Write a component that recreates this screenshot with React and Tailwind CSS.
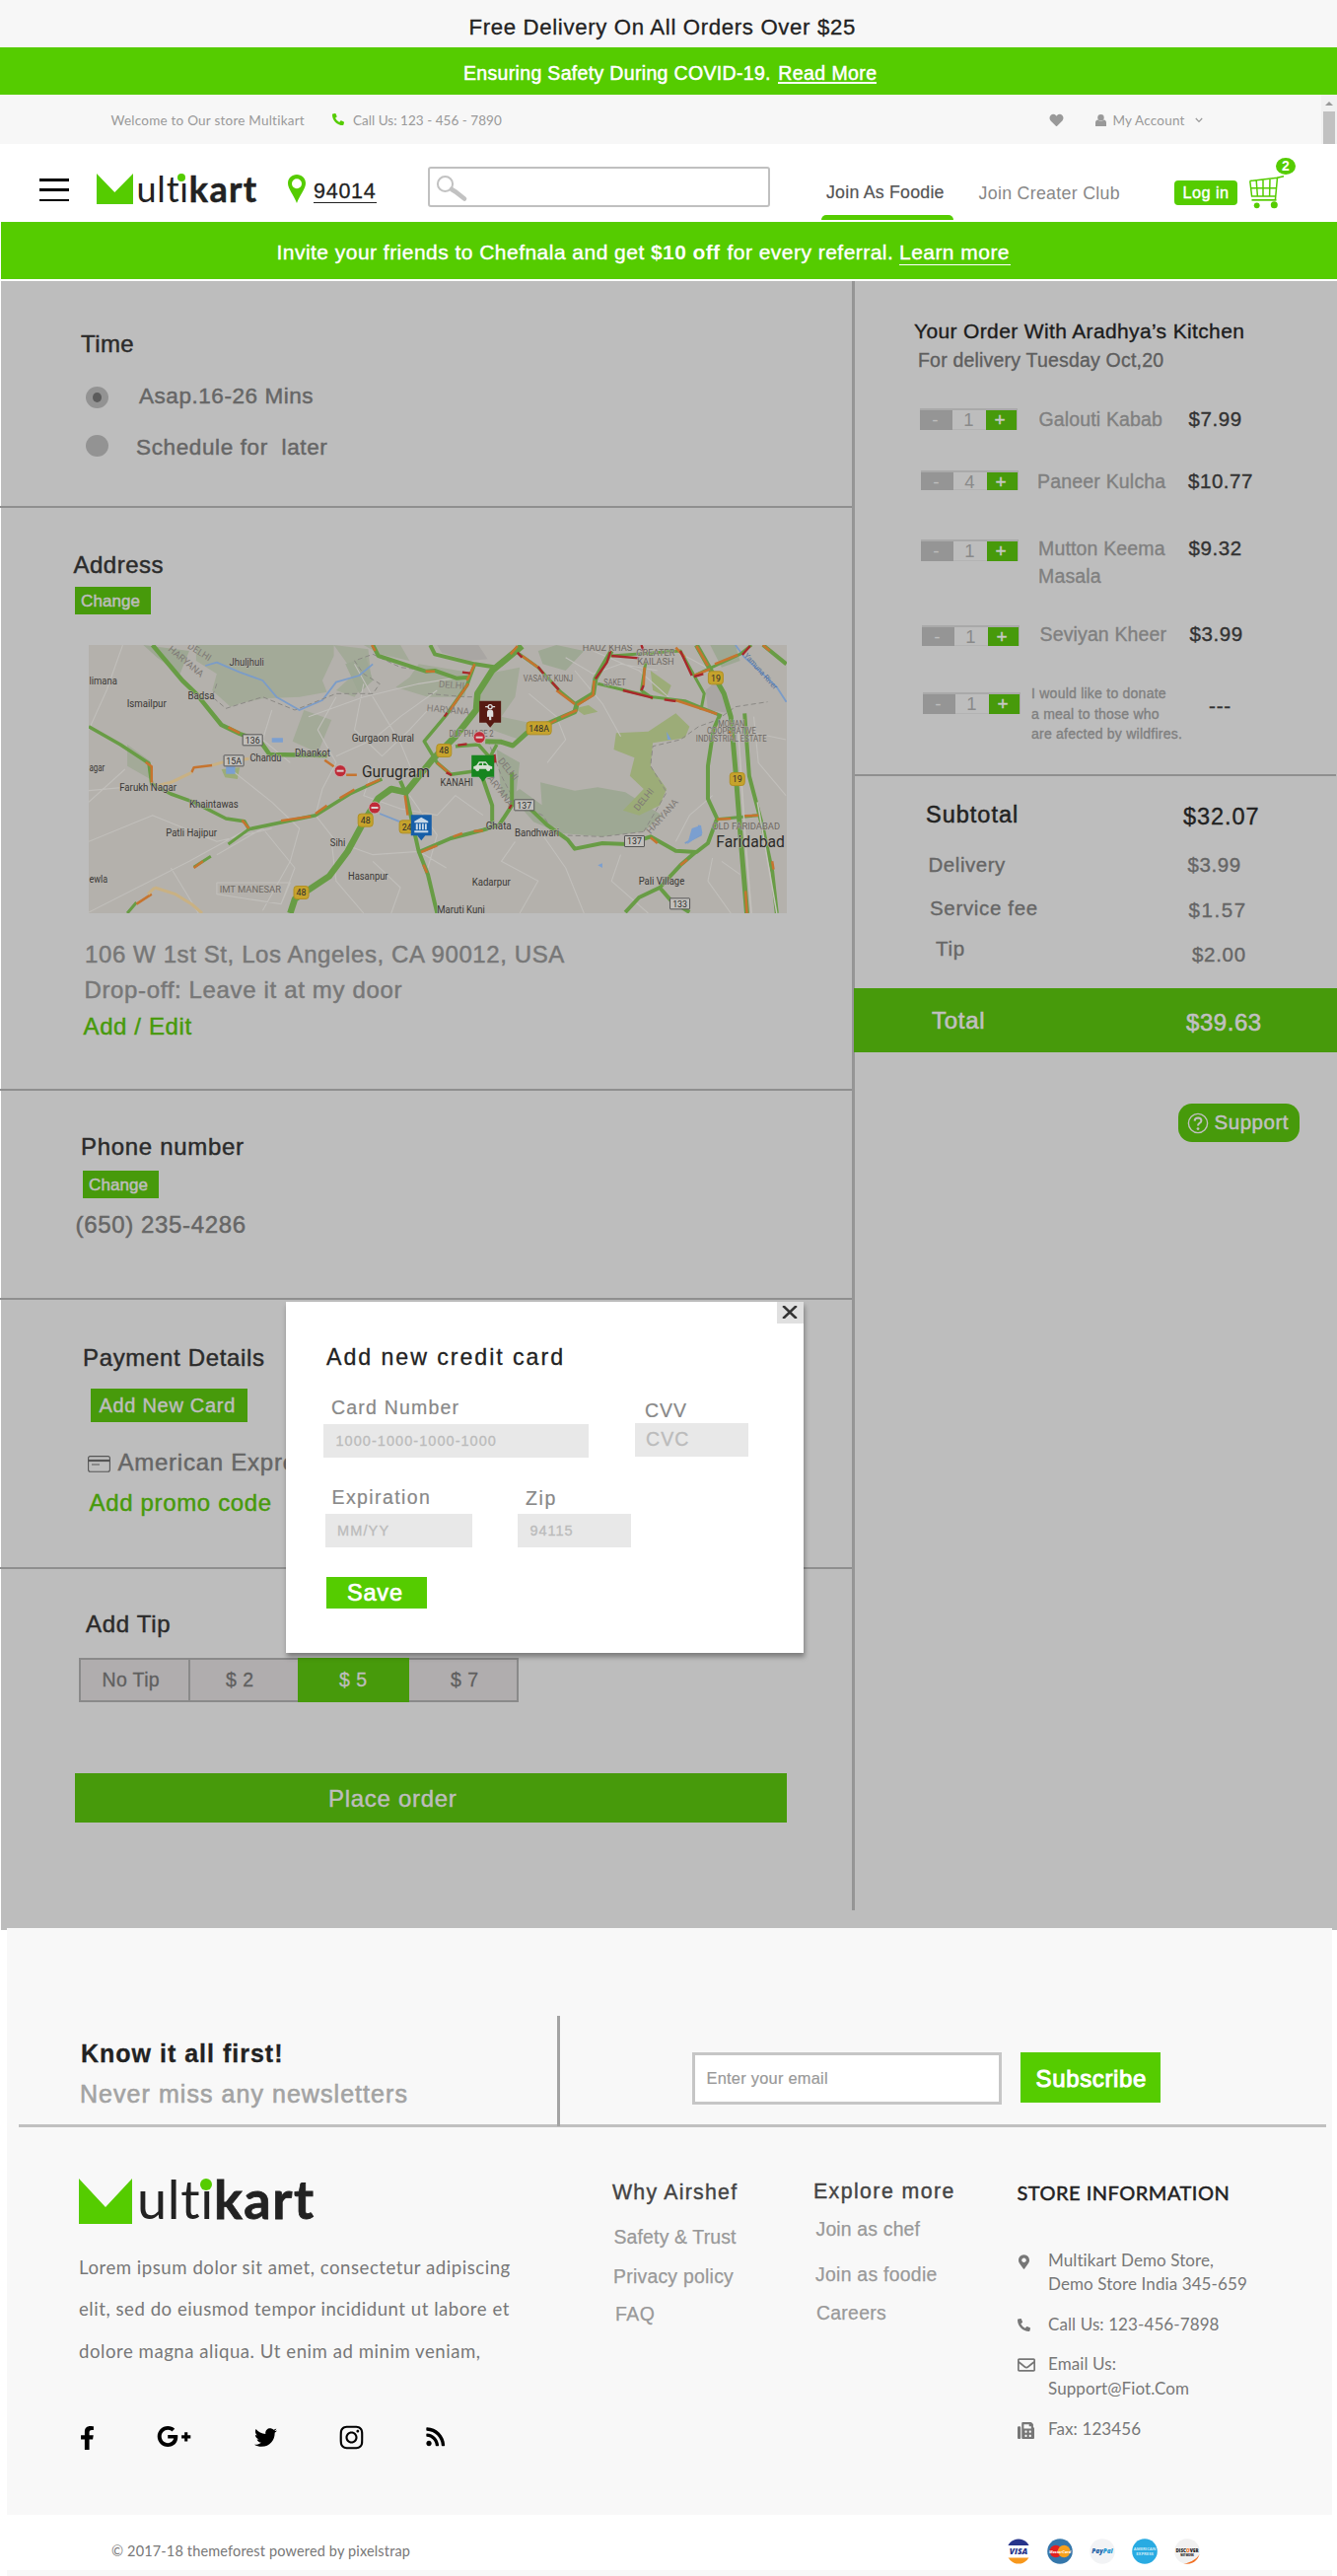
import React from "react";
import {
  FaPhoneAlt,
  FaHeart,
  FaFacebookF,
  FaGooglePlusG,
  FaTwitter,
  FaInstagram,
  FaRss,
  FaMapMarkerAlt,
  FaRegEnvelope,
  FaFax,
} from "react-icons/fa";

/* ---------- Logo ---------- */

function HeaderLogo() {
  return (
    <div className="flex h-[42px] w-[166px] items-start font-[Lato] text-[#222]">
      <svg className="mt-[5px] h-[31px] w-[37px] shrink-0" viewBox="0 0 37 31">
        <path d="M0 0L18.3 19L37 0V31H0Z" fill="#55cc00" />
      </svg>
      <div className="relative ml-[4px] flex whitespace-nowrap text-[36px] leading-[40px]">
        <span className="tracking-[0.8px]">ult&#305;</span>
        <span className="tracking-[1.3px] font-bold [-webkit-text-stroke:0.5px]">kart</span>
        <span className="absolute left-[41px] top-[5px] h-[8px] w-[8px] rounded-full bg-[#55cc00]" />
      </div>
    </div>
  );
}

function FooterLogo() {
  return (
    <div className="flex h-[60px] w-[260px] items-start font-[Lato] text-[#222]">
      <svg className="h-[46px] w-[54px] shrink-0" viewBox="0 0 54 46">
        <path d="M0 0L27 29L54 0V46H0Z" fill="#55cc00" />
      </svg>
      <div className="relative ml-[5px] -mt-[9px] flex whitespace-nowrap text-[54px] leading-[60px]">
        <span className="tracking-[0.7px]">ult&#305;</span>
        <span className="tracking-[1.5px] font-bold [-webkit-text-stroke:0.8px]">kart</span>
        <span className="absolute left-[63.5px] top-[9px] h-[12px] w-[12px] rounded-full bg-[#55cc00]" />
      </div>
    </div>
  );
}

/* ---------- Header ---------- */

function CartIcon() {
  return (
    <svg className="h-[36px] w-[36px]" viewBox="0 0 36 36" fill="none" stroke="#55cc00" strokeWidth="1.5">
      <path d="M35 0.8L28.5 2.2L26.5 24M0.5 5.6L28.5 2.2M0.8 5.6L2.6 21H27M1.6 12.8H27.5M7.2 5L8.4 21M14 4.2V21M21 3.2L20.6 21" />
      <path d="M2.5 24.8H27.5" strokeWidth="1.8" />
      <circle cx="7.7" cy="30.3" r="2.9" fill="#55cc00" stroke="none" />
      <circle cx="25.3" cy="29.7" r="3.5" fill="#55cc00" stroke="none" />
    </svg>
  );
}

function Header() {
  return (
    <header>
      <div className="h-[48px] bg-[#f7f7f7] pl-[475.5px] pt-[15.7px] text-[22.2px] leading-[24px] tracking-[0.66px] text-[#222] [-webkit-text-stroke:0.3px_#222]">
        Free Delivery On All Orders Over $25
      </div>
      <div className="flex h-[48px] items-start bg-[#55cc00] pl-[470px] pt-[14px] text-[19.5px] leading-[24px] text-white [-webkit-text-stroke:0.5px_#fff]">
        <span className="tracking-[0.33px]">Ensuring Safety During COVID-19.</span>
        <span className="ml-[7.5px] h-[22.5px] border-b-2 border-white tracking-[0.4px]">Read More</span>
      </div>
      <div className="flex h-[50px] items-start bg-[#f7f7f7] font-[Lato] text-[13.5px] leading-[24px] text-[#999]">
        <span className="ml-[112.5px] mt-[13.5px] w-[224px] tracking-[0.23px]">Welcome to Our store Multikart</span>
        <FaPhoneAlt className="mt-[19px] h-[12px] w-[12px] text-[#55cc00]" />
        <span className="ml-[9.5px] mt-[13.5px] w-[706px] tracking-[0.03px]">Call Us: 123 - 456 - 7890</span>
        <FaHeart className="mt-[19px] h-[14px] w-[15px]" />
        <svg className="ml-[32px] mt-[20px] h-[12px] w-[11px]" viewBox="0 0 11 12" fill="#999">
          <circle cx="5.5" cy="3.2" r="3.2" />
          <path d="M0 12V8.5Q0 5.6 2.5 5.4Q5.5 8 8.5 5.4Q11 5.6 11 8.5V12Z" />
        </svg>
        <span className="ml-[6.5px] mt-[13.5px] w-[83.5px] tracking-[0.2px]">My Account</span>
        <svg className="mt-[23px] h-[6px] w-[8px]" viewBox="0 0 8 6" fill="none" stroke="#999" strokeWidth="1.2">
          <path d="M0.8 1L4 4.4L7.2 1" />
        </svg>
        <div className="ml-auto flex h-[50px] w-[16.5px] flex-col items-center bg-[#f1f1f1]">
          <svg className="mt-[7px] h-[4px] w-[8px]" viewBox="0 0 8 4">
            <path d="M0 4L4 0L8 4Z" fill="#999" />
          </svg>
          <div className="mt-[6px] w-[12.5px] flex-1 bg-[#c1c1c1]" />
        </div>
      </div>
      <div className="flex h-[79px] items-start bg-white">
        <div className="ml-[40px] mt-[35px] flex w-[30px] flex-col gap-[7.7px]">
          <div className="h-[2.7px] bg-black" />
          <div className="h-[2.7px] bg-black" />
          <div className="h-[2.7px] bg-black" />
        </div>
        <div className="ml-[27.5px] mt-[25px]">
          <HeaderLogo />
        </div>
        <svg className="ml-[28.5px] mt-[31px] h-[29px] w-[18px]" viewBox="0 0 18 29">
          <path
            fillRule="evenodd"
            d="M9 0C4 0 0 3.9 0 8.8C0 14.5 6 21 9 29C12 21 18 14.5 18 8.8C18 3.9 14 0 9 0ZM9 4.2A5 5 0 1 1 9 14.2A5 5 0 1 1 9 4.2Z"
            fill="#55cc00"
          />
        </svg>
        <div className="ml-[8px] mt-[36px] h-[24px] w-[64px] border-b-[1.5px] border-[#222] text-[21.5px] leading-[24px] tracking-[0.75px] text-[#222] [-webkit-text-stroke:0.3px_#222]">
          94014
        </div>
        <div className="ml-[52px] mt-[23px] flex h-[41px] w-[347px] rounded-[3px] border-2 border-[#c0c0c0] bg-white">
          <svg className="ml-[6px] mt-[6px] h-[28px] w-[34px]" viewBox="0 0 34 28" fill="none" stroke="#c2c2c2">
            <ellipse cx="9.5" cy="9.5" rx="7.6" ry="7.4" strokeWidth="2" />
            <path d="M16 15L20 17.5L29 24.5" strokeWidth="4.6" strokeLinecap="round" />
          </svg>
        </div>
        <div className="ml-[52px] mt-[37px] flex w-[134px] flex-col items-start">
          <span className="ml-[5px] text-[17.8px] leading-[24px] tracking-[0.22px] text-[#555] [-webkit-text-stroke:0.2px_#555]">Join As Foodie</span>
          <div className="mt-[11px] h-[5px] w-full rounded-t-[5px] bg-[#55cc00]" />
        </div>
        <span className="ml-[25.5px] mt-[38px] w-[198.5px] text-[17.8px] leading-[24px] tracking-[0.3px] text-[#888]">Join Creater Club</span>
        <div className="mt-[37px] h-[25px] w-[64px] rounded-[4px] bg-[#55cc00] pl-[8.5px] text-[16.3px] leading-[25px] tracking-[0.45px] text-white [-webkit-text-stroke:0.4px_#fff]">
          Log in
        </div>
        <div className="relative ml-[12px] mt-[32px]">
          <CartIcon />
          <div className="absolute -top-[18px] left-[27px] h-[17px] w-[20px] rounded-[50%] bg-[#55cc00] text-center text-[14px] font-bold leading-[17px] text-white">2</div>
        </div>
      </div>
      <div className="ml-px flex h-[58px] items-start bg-[#55cc00] pl-[279.5px] pt-[19px] text-[21px] leading-[24px] text-white [-webkit-text-stroke:0.4px_#fff]">
        <span className="w-[379.5px] tracking-[0.47px]">Invite your friends to Chefnala and get</span>
        <span className="w-[77.5px] font-bold tracking-[0.4px] [-webkit-text-stroke:0px]">$10 off</span>
        <span className="w-[174.5px] tracking-[0.47px]">for every referral.</span>
        <span className="h-[24.5px] w-[112.5px] border-b-[1.5px] border-white tracking-[0.46px]">Learn more</span>
      </div>
      <div className="h-[2px] bg-white" />
    </header>
  );
}

/* ---------- Map ---------- */

const ROADS = {
  faint:
    "M21 300L60 180L95 42M21 485L140 470M100 420L21 520M21 640L160 560L300 640L420 600M370 600L240 700L21 855M300 680L400 600L470 720L440 830M330 420L420 520L480 600L460 700L400 850M300 765L460 765L440 830L300 800ZM420 240L400 330L460 400M560 200L520 300L560 400L530 480L515 560L560 640L640 680L740 670L800 720M620 160L600 300L660 380L720 300L760 240M560 380L640 330L700 260L780 180M500 260L620 200L740 160L830 140M640 420L620 500L700 540L780 560L820 500L880 560M720 500L780 620L760 720M600 100L640 200L700 340L730 440M980 190L1040 260L1060 330L1020 400M1080 120L1140 220L1180 320M1120 60L1220 120L1300 220M1000 600L1060 720L1100 858M1180 680L1160 760L1240 858M1380 690L1370 760L1420 858M1400 700L1440 740M1440 300L1540 330M1470 260L1480 400L1540 500M1300 640L1330 560L1380 500M1300 60L1380 120M1060 80L1120 130L1180 100L1260 120M950 640L920 700L1000 760L960 858M550 640L560 760L620 858M200 720L260 858M640 700L700 780L680 858",
  dashed:
    "M300 160L290 200L320 235L400 200L470 240L560 190L640 190L655 160L620 130L600 90L640 70L700 110L760 120M760 190L840 200L870 200M890 330L920 440L950 520L1010 560L1040 620L1140 625L1230 610M1230 610L1280 490L1245 410L1250 350L1310 330L1350 290L1390 270L1430 230L1500 215",
};

const TRAFFIC = [
  { c: "#689c45", w: 6.5, d: "M460 858L470 815L545 745L585 670L622 575L652 508L680 480L712 490L770 390L820 320L865 240L868 190L900 120L965 45" },
  { c: "#689c45", w: 4.5, d: "M160 42L225 150L255 190L310 285L350 312L395 335L415 375L540 378" },
  { c: "#689c45", w: 3.5, d: "M21 290L90 345L152 402L158 465L200 495L250 520L320 570L360 578L370 602L515 560L590 495L660 450" },
  { c: "#689c45", w: 3, d: "M370 602L325 648M287 685L250 718M105 858L125 825" },
  { c: "#689c45", w: 4, d: "M640 42L652 75L755 122L775 120L822 143L850 140M765 42L775 70L862 100L910 110" },
  { c: "#689c45", w: 3.5, d: "M862 100L845 165L800 255L752 335L780 400L810 436L880 422L910 345M820 350L870 345L905 400" },
  { c: "#689c45", w: 5, d: "M885 335L920 337L945 348L975 310L1080 245L1085 220L1120 190L1125 145L1160 60" },
  { c: "#689c45", w: 3, d: "M955 65L1000 110L1050 185L1085 225M1130 160L1250 200L1320 212L1400 258M1160 75L1310 60L1340 135L1440 70L1465 42M1235 90L1225 180L1250 205M1340 135L1362 190L1355 240" },
  { c: "#689c45", w: 5, d: "M1345 42L1385 140L1405 190L1420 260L1430 420L1442 640L1455 858" },
  { c: "#689c45", w: 4, d: "M1450 250L1460 440L1490 600L1510 730L1520 858M1490 42L1541 100" },
  { c: "#689c45", w: 4, d: "M1395 258L1382 300L1370 410L1370 510L1390 570L1370 645L1345 672L1300 668L1245 625L1195 648L1140 645L1080 662L1065 635L1020 590L975 530M1345 670L1310 712L1265 780L1220 810L1190 855M1265 780L1290 820L1330 855" },
  { c: "#689c45", w: 4, d: "M700 455L712 495L740 670L760 740L780 858M740 672L810 630L880 605L915 590L943 530L943 430M880 450L900 530L900 600" },
  { c: "#689c45", w: 3, d: "M1390 572L1480 560" },
  { c: "#c4c1bc", w: 1.5, d: "M1436 300L1452 640L1465 858M1478 520L1520 858" },
  { c: "#c6742f", w: 2.5, d: "M145 398L158 412L158 462M245 430L250 415L290 408M325 292L350 310M355 575L370 600M440 577L505 563M515 555L540 530M568 508L600 482M625 470L655 452M582 437L605 437M535 392L555 412M250 720L270 700M125 830L158 800M755 122L775 122M848 160L808 240M862 100L845 150M780 400L810 436M710 500L716 560M745 672L780 652M815 625L835 615M860 608L880 607M750 710L758 735M1020 285L1040 270M1050 262L1085 240M1085 225L1120 195L1122 150M1245 628L1260 645M1310 712L1325 695M1390 572L1420 570M1450 562L1480 560M1452 790L1455 858M1510 700L1513 725M1345 45L1370 105M1340 135L1375 115M1385 100L1435 72M1232 110L1230 165M1300 210L1390 252M965 75L1000 110M1040 180L1080 222M638 42L645 60M940 70L955 45M1490 42L1505 60M1300 50L1320 80M1415 300L1425 330" },
  { c: "#a8282b", w: 2.4, d: "M835 125L852 128M955 65L965 80M1000 108L1012 130M1030 155L1045 178M1125 145L1150 95L1158 60M1160 75L1220 82M1310 60L1335 135M1185 180L1250 203M1225 180L1230 165M1275 208L1300 213M1360 130L1340 138M825 347L845 343M800 430L812 438M905 375L907 400M937 540L942 528M1445 72L1462 45M1225 42L1230 60M796 260L802 248" },
  { c: "#c9b183", w: 3, d: "M170 470L200 460L245 430M290 408L315 398M350 392L370 388M165 780L210 800L245 830L268 858M165 780L150 800" },
];

const LABELS = [
  ["Jhuljhuli", 327, 403, 106],
  ["limana", 22, 83, 162],
  ["Badsa", 237, 295, 208],
  ["Ismailpur", 104, 190, 231],
  ["Gurgaon Rural", 594, 730, 337],
  ["Chandu", 372, 441, 395],
  ["Dhankot", 470, 547, 382],
  ["agar", 22, 56, 425],
  ["Farukh Nagar", 88, 212, 485],
  ["Khaintawas", 240, 347, 536],
  ["Patli Hajipur", 189, 300, 625],
  ["Sihi", 547, 580, 655],
  ["Hasanpur", 586, 673, 757],
  ["ewla", 22, 62, 765],
  ["Kadarpur", 856, 940, 774],
  ["Ghata", 886, 942, 603],
  ["Bandhwari", 949, 1046, 625],
  ["KANAHI", 787, 858, 472],
  ["Maruti Kunj", 780, 884, 859],
  ["Pali Village", 1219, 1319, 772],
];

const AREA_LABELS = [
  ["HAUZ KHAS", 1097, 1205, 60],
  ["GREATER", 1214, 1298, 75],
  ["KAILASH", 1216, 1296, 103],
  ["VASANT KUNJ", 968, 1076, 152],
  ["SAKET", 1143, 1191, 165],
  ["IMT MANESAR", 306, 440, 795],
  ["DLF PHASE 2", 806, 903, 320],
  ["MOHAN", 1392, 1450, 290],
  ["COOPERATIVE", 1368, 1475, 313],
  ["INDUSTRIAL ESTATE", 1344, 1498, 335],
  ["OLD FARIDABAD", 1379, 1527, 604],
];

const REGION_LABELS = [
  ["DELHI", 235, 50, 38],
  ["HARYANA", 193, 58, 47],
  ["DELHI", 783, 170, 5],
  ["HARYANA", 757, 243, 6],
  ["DELHI", 912, 395, 60],
  ["HARYANA", 880, 432, 62],
  ["DELHI", 1218, 548, -60],
  ["HARYANA", 1245, 618, -57],
];

const mx = (x) => (x - 21) * 0.4655;
const my = (y) => (y - 42) / 3;

function NoEntry({ x, y }) {
  return (
    <g transform={`translate(${mx(x)} ${my(y)})`}>
      <circle r="6" fill="#bf2b38" stroke="#c9b9b7" strokeWidth="0.8" />
      <rect x="-3.5" y="-1" width="7" height="2" fill="#ddd0cf" />
    </g>
  );
}

function Shield({ x, y, label, tone }) {
  const w = label.length * 5 + 5;
  const yellow = tone === "yellow";
  return (
    <g transform={`translate(${mx(x)} ${my(y)})`}>
      <rect x={-w / 2} y={yellow ? -6.5 : -5.5} width={w} height={yellow ? 13 : 11} rx={yellow ? 3 : 0.5} fill={yellow ? "#c6a32c" : "#c2c0bc"} stroke={yellow ? "#b08f25" : "#555"} strokeWidth="1" />
      <text y="3.2" textAnchor="middle" fontSize="8.8" fill="#2c2c2c">{label}</text>
    </g>
  );
}

function CityMap() {
  return (
    <svg className="block h-[272px] w-[708px]" viewBox="0 0 708 272" fontFamily="Roboto, sans-serif">
      <rect width="708" height="272" fill="#b4b1ac" />
      <g transform="scale(0.4655 0.33333) translate(-21 -42)">
        <path d="M255 42H555V75L530 150L540 185L480 200L400 205L350 220L330 230L290 180L300 130L255 90ZM490 240L550 270L520 370L465 335ZM555 42L630 55L635 130L600 200L560 180L600 130ZM740 100L850 125L840 200L760 200L690 170L720 140ZM105 345L155 395L155 450L105 410ZM620 42L700 42L720 90L655 70ZM960 110L950 200L920 260L985 280L960 330L900 300L870 200L905 125Z" fill="#a3aa98" />
        <path d="M1005 460L1080 485L1130 475L1190 490L1270 560L1230 610L1140 625L1050 615L1010 560ZM960 480L1010 530L1040 610L990 580L940 500ZM910 360L960 400L950 520L920 500ZM1040 42L1100 60L1060 120L1010 100L1000 60ZM140 42L240 60L220 130L170 80ZM580 100L625 80L640 150L610 190ZM1375 42L1430 42L1440 90L1400 110Z" fill="#9ea894" />
        <path d="M1170 310L1240 305L1300 250L1330 290L1320 325L1250 340L1245 410L1280 480L1265 530L1220 560L1185 545L1230 480L1200 440L1210 385L1165 360ZM1245 120L1290 165L1280 200L1250 180ZM1080 235L1110 225L1130 245L1100 255ZM310 420L350 415L345 450L318 445Z" fill="#9cac78" />
        <path d="M780 42H870L890 85L850 90L790 65ZM1390 150L1405 210L1420 250L1370 240L1365 180Z" fill="#a9a6a3" />
        <g fill="none" strokeLinejoin="round">
          <path d={ROADS.faint} stroke="#c1bfbb" strokeWidth="1.1" vectorEffect="non-scaling-stroke" />
          <path d="M275 105L300 95L350 125L400 150L430 200L480 240L530 210L560 155L610 135L640 100M1430 42L1450 80L1490 130L1520 170L1541 215M1350 590L1355 620L1320 645M655 555L700 580" stroke="#7b9cc8" strokeWidth="1.8" vectorEffect="non-scaling-stroke" />
          <path d={ROADS.dashed} stroke="#8b8985" strokeWidth="1" strokeDasharray="5 3" vectorEffect="non-scaling-stroke" />
          {TRAFFIC.map((r, i) => (
            <path key={i} d={r.d} stroke={r.c} strokeWidth={r.w} vectorEffect="non-scaling-stroke" />
          ))}
        </g>
        <path d="M320 412H340V434H320ZM420 325H444V338H420ZM1335 600L1355 590L1358 615L1325 648ZM1130 712L1140 706V720ZM1280 305L1290 330L1282 330Z" fill="#7b9fd0" />
      </g>
      <g fontSize="10.5" fill="#3a3835" stroke="#b4b1ac" strokeWidth="1" paintOrder="stroke">
        {LABELS.map(([t, x0, x1, y]) => (
          <text key={t} x={mx(x0)} y={my(y)} textLength={mx(x1) - mx(x0)} lengthAdjust="spacingAndGlyphs">{t}</text>
        ))}
      </g>
      <g fontSize="8.6" fill="#6f6963" stroke="#b4b1ac" strokeWidth="0.8" paintOrder="stroke">
        {AREA_LABELS.map(([t, x0, x1, y]) => (
          <text key={t} x={mx(x0)} y={my(y)} textLength={mx(x1) - mx(x0)} lengthAdjust="spacingAndGlyphs">{t}</text>
        ))}
      </g>
      <g fontSize="9.5" fill="#7f7a76">
        {REGION_LABELS.map(([t, x, y, a], i) => (
          <text key={i} transform={`translate(${mx(x)} ${my(y)}) rotate(${a * 0.85})`}>{t}</text>
        ))}
        <text transform={`translate(${mx(1448)} ${my(75)}) rotate(48)`} fill="#52709b" fontSize="7.6">Yamuna River</text>
      </g>
      <g fill="#2b2a28" stroke="#b4b1ac" strokeWidth="1.2" paintOrder="stroke">
        <text x={mx(616)} y={my(444)} fontSize="16" textLength="69" lengthAdjust="spacingAndGlyphs">Gurugram</text>
        <text x={mx(1388)} y={my(657)} fontSize="16" textLength="69.5" lengthAdjust="spacingAndGlyphs">Faridabad</text>
      </g>
      <Shield x={378} y={331} label="136" />
      <Shield x={337} y={394} label="15A" />
      <Shield x={970} y={529} label="137" />
      <Shield x={1210} y={639} label="137" />
      <Shield x={1309} y={829} label="133" />
      <Shield x={1387} y={142} label="19" tone="yellow" />
      <Shield x={1434} y={450} label="19" tone="yellow" />
      <Shield x={1002} y={295} label="148A" tone="yellow" />
      <Shield x={795} y={363} label="48" tone="yellow" />
      <Shield x={624} y={575} label="48" tone="yellow" />
      <Shield x={484} y={795} label="48" tone="yellow" />
      <Shield x={714} y={595} label="24" tone="yellow" />
      <NoEntry x={872} y={323} />
      <NoEntry x={569} y={425} />
      <NoEntry x={644} y={537} />
      <g transform={`translate(${mx(872)} ${my(212)})`}>
        <path d="M0 0H22V22H15L11 27L7 22H0Z" fill="#571a12" />
        <g fill="none" stroke="#ddd" strokeWidth="1.3">
          <path d="M6 6H9M13 6H16" />
          <circle cx="11" cy="6" r="2" />
          <path d="M8.5 16V12Q8.5 9.5 11 9.5Q13.5 9.5 13.5 12V16" fill="#ddd" />
          <path d="M11 14V19.5" strokeWidth="2.2" />
        </g>
      </g>
      <g transform={`translate(${mx(855)} ${my(377)})`}>
        <path d="M0 0H23V22H15.5L11.5 27L7.5 22H0Z" fill="#17851f" />
        <path d="M2 14V11.5L5 10.3L7.5 6.5H14.5L17.5 10.3L21 11.5V14H19A2 2 0 0 1 15 14H8A2 2 0 0 1 4 14ZM8.5 8L7 10.3H10.8V8ZM12 8V10.3H15.8L14 8Z" fill="#d5dfd3" fillRule="evenodd" />
        <circle cx="6" cy="14.5" r="1.6" fill="#d5dfd3" />
        <circle cx="17" cy="14.5" r="1.6" fill="#d5dfd3" />
      </g>
      <g transform={`translate(${mx(723)} ${my(559)})`}>
        <path d="M0 0H21V21H14.5L10.5 26L6.5 21H0Z" fill="#165ea8" />
        <path d="M3.5 6.5L10.5 2.5L17.5 6.5V8H3.5ZM5 9H7V15H5ZM8.2 9H10V15H8.2ZM11.2 9H13V15H11.2ZM14.2 9H16V15H14.2ZM3.5 16H17.5V18H3.5Z" fill="#c9d9e8" />
      </g>
    </svg>
  );
}

/* ---------- Checkout, left column ---------- */

function ChangeButton({ className }) {
  return (
    <button className={`block h-[28px] w-[77px] bg-[#479a0b] pl-[6px] text-left text-[17px] leading-[29px] tracking-[0.1px] text-[#bdbdbd] [-webkit-text-stroke:0.5px_#bdbdbd] ${className}`}>
      Change
    </button>
  );
}

function TipOption({ label, className }) {
  return (
    <div className={`h-full pt-[10px] text-[19.5px] leading-[24px] [-webkit-text-stroke:0.3px] ${className}`}>{label}</div>
  );
}

function CheckoutDetails() {
  return (
    <div className="w-[864px] text-[24px] leading-[24px] text-[#2b2b2b] [-webkit-text-stroke:0.45px]">
      <section className="h-[230px] border-b-2 border-[#8f8f8f] pt-[52px]">
        <h2 className="ml-[82px] text-[24px] tracking-[0.4px]">Time</h2>
        <div className="mt-[29px] flex h-[24px] items-start text-[22.5px] text-[#666]">
          <div className="ml-[87px] mt-[2px] flex h-[22px] w-[23px] items-center justify-center rounded-[50%] bg-[#939393]">
            <div className="h-[10px] w-[9px] rounded-[50%] bg-[#5c5c5c]" />
          </div>
          <span className="ml-[31px] tracking-[0.55px]">Asap.16-26 Mins</span>
        </div>
        <div className="mt-[27.5px] flex h-[24px] items-start text-[22.5px] text-[#666]">
          <div className="ml-[87px] -mt-px h-[22px] w-[23px] rounded-[50%] bg-[#939393]" />
          <span className="ml-[28px] whitespace-pre tracking-[0.62px]">Schedule for  later</span>
        </div>
      </section>

      <section className="h-[591px] border-b-2 border-[#8f8f8f] pt-[46px]">
        <h2 className="ml-[74.5px] tracking-[0.49px]">Address</h2>
        <ChangeButton className="ml-[76px] mt-[10px]" />
        <div className="ml-[90px] mt-[31px] [-webkit-text-stroke:0px]">
          <CityMap />
        </div>
        <p className="ml-[86px] mt-[30px] tracking-[0.6px] text-[#777]">106 W 1st St, Los Angeles, CA 90012, USA</p>
        <p className="ml-[85.5px] mt-[12px] tracking-[0.65px] text-[#777]">Drop-off: Leave it at my door</p>
        <p className="ml-[84.5px] mt-[13px] tracking-[0.62px] text-[#479a0b]">Add / Edit</p>
      </section>

      <section className="h-[212px] border-b-2 border-[#8f8f8f] pt-[44.5px]">
        <h2 className="ml-[82px] tracking-[0.69px]">Phone number</h2>
        <ChangeButton className="ml-[84px] mt-[12.5px]" />
        <p className="ml-[76.5px] mt-[15px] text-[24px] tracking-[0.65px] text-[#666]">(650) 235-4286</p>
      </section>

      <section className="h-[273px] border-b-2 border-[#8f8f8f] pt-[47px]">
        <h2 className="ml-[84px] tracking-[0.66px]">Payment Details</h2>
        <button className="ml-[92px] mt-[19px] block h-[34px] w-[159px] bg-[#479a0b] pl-[8.5px] text-left text-[20px] leading-[35px] tracking-[0.7px] text-[#bdbdbd]">
          Add New Card
        </button>
        <div className="mt-[29px] flex h-[24px] items-start text-[#666]">
          <svg className="ml-[89px] mt-[5px] h-[17px] w-[23px]" viewBox="0 0 23 17" fill="none" stroke="#555">
            <rect x="0.6" y="0.6" width="21.8" height="15.6" rx="2" strokeWidth="1.1" />
            <path d="M0.6 5H22.4" strokeWidth="2.2" />
            <path d="M4 9H12" strokeWidth="1" />
          </svg>
          <span className="ml-[7.5px] whitespace-nowrap tracking-[0.75px]">American Express</span>
        </div>
        <p className="ml-[90.5px] mt-[17px] tracking-[0.66px] text-[#479a0b]">Add promo code</p>
      </section>

      <section className="pt-[44px]">
        <h2 className="ml-[87px] tracking-[0.69px]">Add Tip</h2>
        <div className="ml-[80px] mt-[22px] flex h-[45px] w-[446px] text-[#5f5f5f]">
          <TipOption label="No Tip" className="w-[111px] border-y-2 border-l-2 border-[#8a8a8a] bg-[#b0adae] pl-[21.5px] !pt-[8px] tracking-[0.37px]" />
          <TipOption label="$ 2" className="w-[111px] border-y-2 border-l-2 border-[#8a8a8a] bg-[#b0adae] pl-[36px] !pt-[8px] tracking-[0.52px]" />
          <TipOption label="$ 5" className="w-[113px] bg-[#479a0b] pl-[42px] tracking-[0.52px] text-[#bdbdbd]" />
          <TipOption label="$ 7" className="w-[111px] border-y-2 border-r-2 border-[#8a8a8a] bg-[#b0adae] pl-[42px] !pt-[8px] tracking-[0.52px]" />
        </div>
        <button className="ml-[76px] mt-[72px] block h-[50px] w-[722px] bg-[#479a0b] pl-[257px] text-left text-[24px] leading-[51px] tracking-[0.7px] text-[#bdbdbd]">
          Place order
        </button>
      </section>
    </div>
  );
}

/* ---------- Order summary, right column ---------- */

const ORDER = [
  { qty: 1, name: "Galouti Kabab", price: "$7.99", row: "h-[63px]", step: "ml-[66px] mt-[2px] h-[22px]", nm: "left-[186.5px] mt-[1px] tracking-[0.15px]", pr: "left-[338.5px] mt-[1px] tracking-[0.6px]" },
  { qty: 4, name: "Paneer Kulcha", price: "$10.77", row: "h-[66px]", step: "ml-[67px] mt-[2px] h-[20px]", nm: "left-[185px] mt-[0.5px] tracking-[0.19px]", pr: "left-[338px] mt-[1px] tracking-[0.54px]" },
  { qty: 1, name: "Mutton Keema Masala", price: "$9.32", row: "h-[89px]", step: "ml-[67px] mt-[6px] h-[22px]", nm: "left-[186px] mt-[0.7px] w-[140px] leading-[28.6px] tracking-[0.16px]", pr: "left-[338.5px] mt-[3.2px] tracking-[0.6px]" },
  { qty: 1, name: "Seviyan Kheer", price: "$3.99", row: "h-[63px]", step: "ml-[68px] mt-[4px] h-[21px]", nm: "left-[187.5px] mt-[0.5px] tracking-[0.14px]", pr: "left-[339.5px] mt-[1px] tracking-[0.6px]" },
];

function Stepper({ qty, className }) {
  return (
    <div className={`flex w-[99px] shrink-0 items-stretch border-t-2 border-[#a9a9a9] text-center text-[19px] leading-[20px] [-webkit-text-stroke:0px] ${className}`}>
      <span className="w-[33px] bg-[#959595] pr-[2px] text-[#bdbdbd]">-</span>
      <span className="w-[34px] border-b border-[#b3b3b3] pr-[1px] text-[18.5px] text-[#8a8a8a]">{qty}</span>
      <span className="w-[31px] bg-[#479a0b] pr-[3px] text-[#c8c8c8] [-webkit-text-stroke:0.4px_#c8c8c8]">+</span>
      <span className="w-px bg-[#a9a9a9]" />
    </div>
  );
}

function TotalRow({ label, value, row, l, v }) {
  return (
    <div className={`flex items-start text-[20.5px] text-[#666] ${row}`}>
      <span className={l}>{label}</span>
      <span className={v}>{value}</span>
    </div>
  );
}

function OrderSummary() {
  return (
    <div className="w-[489px] pt-[39px] leading-[24px] [-webkit-text-stroke:0.35px]">
      <h2 className="ml-[60px] text-[21px] tracking-[0.36px] text-[#1c1c1c]">Your Order With Aradhya’s Kitchen</h2>
      <p className="ml-[64px] mt-[5px] text-[19.5px] tracking-[0.2px] text-[#5e5e5e]">For delivery Tuesday Oct,20</p>
      <div className="mt-[35px]">
        {ORDER.map((o) => (
          <div key={o.name} className={`relative flex items-start ${o.row}`}>
            <Stepper qty={o.qty} className={o.step} />
            <span className={`absolute text-[19.5px] text-[#808080] ${o.nm}`}>{o.name}</span>
            <span className={`absolute text-[20.5px] text-[#333] ${o.pr}`}>{o.price}</span>
          </div>
        ))}
        <div className="flex h-[92px] items-start">
          <Stepper qty={1} className="ml-[69px] mt-[9px] h-[22px]" />
          <p className="ml-[11px] w-[180px] whitespace-pre-line text-[14px] leading-[20.5px] tracking-[0.24px] text-[#808080]">
            {"I would like to donate\na meal to those who\nare afected by wildfires."}
          </p>
          <span className="mt-[11px] text-[20.5px] tracking-[0.82px] text-[#333]">---</span>
        </div>
      </div>
      <div className="mr-px h-[217px] border-t-2 border-[#8f8f8f] pt-[26px]">
        <TotalRow label="Subtotal" value="$32.07" row="h-[51px] !text-[23.5px] !text-[#222]" l="ml-[72px] w-[261px] mt-px tracking-[1px] [-webkit-text-stroke:0.5px]" v="mt-[3px] tracking-[0.92px]" />
        <TotalRow label="Delivery" value="$3.99" row="h-[45px]" l="ml-[74.5px] w-[263px] mt-px tracking-[0.54px]" v="mt-px tracking-[0.6px]" />
        <TotalRow label="Service fee" value="$1.57" row="h-[40px]" l="ml-[76px] w-[262.5px] tracking-[0.66px]" v="mt-[2px] tracking-[1.6px]" />
        <TotalRow label="Tip" value="$2.00" row="h-[24px]" l="ml-[82px] w-[260px] mt-px tracking-[0.69px]" v="mt-[7px] tracking-[0.7px]" />
      </div>
      <div className="-ml-px flex h-[65px] items-start bg-[#479a0b] text-[24px] text-[#c0c0c0] [-webkit-text-stroke:0.6px]">
        <span className="ml-[79px] mt-[21px] w-[258px] tracking-[0.75px]">Total</span>
        <span className="mt-[23px] tracking-[0.55px]">$39.63</span>
      </div>
      <button className="ml-[328px] mt-[52px] flex h-[39px] w-[123px] items-start rounded-[14px] bg-[#479a0b] text-[#c0c0c0]">
        <svg className="ml-[9px] mt-[8.5px] h-[22px] w-[22px]" viewBox="0 0 22 22" fill="none" stroke="#c0c0c0">
          <circle cx="11" cy="11" r="9.6" strokeWidth="1.4" />
          <path d="M7.6 8.6Q7.8 5.4 11.2 5.4Q14.4 5.6 14.4 8.2Q14.4 9.8 12.6 10.8Q11 11.8 11 13.4" strokeWidth="2" />
          <circle cx="11" cy="16.6" r="1.4" fill="#c0c0c0" stroke="none" />
        </svg>
        <span className="ml-[5.5px] mt-[7px] text-[20.5px] leading-[24px] tracking-[0.53px] [-webkit-text-stroke:0.5px_#c0c0c0]">Support</span>
      </button>
    </div>
  );
}

/* ---------- Credit card dialog ---------- */

function Field({ label, placeholder, className, labelClass, boxClass }) {
  return (
    <div className={className}>
      <div className={`text-[19.5px] text-[#888] [-webkit-text-stroke:0.2px] ${labelClass}`}>{label}</div>
      <div className={`bg-[#e8e8e8] text-[#bbb] [-webkit-text-stroke:0.3px] ${boxClass}`}>{placeholder}</div>
    </div>
  );
}

function CardDialog() {
  return (
    <div className="absolute left-[289px] top-[1035px] h-[356px] w-[525px] bg-white leading-[24px] shadow-[1px_4px_5px_rgba(0,0,0,0.35)]">
      <button className="absolute right-0 top-0 flex h-[22px] w-[27px] items-center justify-center bg-[#e0e0e0]">
        <svg className="-ml-[1px] -mt-[1px] h-[13px] w-[16px]" viewBox="0 0 16 13" stroke="#333" strokeWidth="2.5">
          <path d="M1.2 0L14.8 13M14.8 0L1.2 13" />
        </svg>
      </button>
      <h2 className="pl-[41px] pt-[44px] text-[23.2px] tracking-[1.95px] text-[#222] [-webkit-text-stroke:0.3px]">Add new credit card</h2>
      <div className="mt-[26.5px] flex h-[91px] items-start pl-[38px]">
        <Field
          label="Card Number"
          placeholder="1000-1000-1000-1000"
          className="w-[316px]"
          labelClass="pl-[8px] tracking-[1.2px]"
          boxClass="mt-[5.5px] h-[34px] w-[269px] pl-[12.5px] text-[14.5px] leading-[34px] tracking-[1.05px]"
        />
        <Field
          label="CVV"
          placeholder="CVC"
          className="mt-[3px]"
          labelClass="pl-[10px] tracking-[1px]"
          boxClass="mt-[1.5px] h-[34px] w-[115px] pl-[11px] text-[19.5px] leading-[33px] tracking-[1.1px]"
        />
      </div>
      <div className="flex h-[94px] items-start pl-[40px]">
        <Field
          label="Expiration"
          placeholder="MM/YY"
          className="w-[195px]"
          labelClass="pl-[6.5px] tracking-[1.4px]"
          boxClass="mt-[5.5px] h-[34px] w-[149px] pl-[12px] text-[14.5px] leading-[34px] tracking-[1.14px]"
        />
        <Field
          label="Zip"
          placeholder="94115"
          className="mt-[1px]"
          labelClass="pl-[8px] tracking-[1.6px]"
          boxClass="mt-[4.5px] h-[34px] w-[115px] pl-[12.5px] text-[14.5px] leading-[34px] tracking-[0.95px]"
        />
      </div>
      <button className="ml-[41px] -mt-px block h-[32px] w-[102px] bg-[#55cc00] pl-[21px] text-left text-[23.5px] leading-[33px] tracking-[0.8px] text-white [-webkit-text-stroke:0.7px_#fff]">
        Save
      </button>
    </div>
  );
}

/* ---------- Footer ---------- */

function FooterLinks({ title, titleClass, links, className }) {
  return (
    <div className={`text-[19.4px] leading-[24px] text-[#999] [-webkit-text-stroke:0.25px] ${className}`}>
      <h3 className={`text-[21.3px] text-[#444] [-webkit-text-stroke:0.4px_#444] ${titleClass}`}>{title}</h3>
      {links.map(([t, c]) => (
        <p key={t} className={c}>{t}</p>
      ))}
    </div>
  );
}

function InfoRow({ icon, lines, className }) {
  return (
    <div className={`flex items-start ${className}`}>
      <div className="w-[31.5px] shrink-0 text-[#777]">{icon}</div>
      <p className="whitespace-pre-line">{lines}</p>
    </div>
  );
}

function PaymentBadges() {
  return (
    <div className="-mt-[1px] flex items-start font-['Open_Sans'] italic">
      <svg className="h-[26px] w-[24px]" viewBox="0 0 24 26">
        <clipPath id="visa"><ellipse cx="12" cy="13" rx="12" ry="12.6" /></clipPath>
        <g clipPath="url(#visa)">
          <rect width="24" height="26" fill="#fff" />
          <rect width="24" height="7" fill="#27348b" />
          <rect y="19.5" width="24" height="7" fill="#f7981d" />
        </g>
        <text x="12" y="16.4" textAnchor="middle" fontSize="8.5" fontWeight="800" fill="#27348b">VISA</text>
      </svg>
      <svg className="ml-[17px] h-[26px] w-[26px]" viewBox="0 0 26 26">
        <circle cx="13" cy="13" r="12.8" fill="#3577ab" />
        <circle cx="8.8" cy="13" r="6.2" fill="#e2201f" />
        <circle cx="17.2" cy="13" r="6.2" fill="#f7a11c" />
        <text x="13" y="14.6" textAnchor="middle" fontSize="4" fontWeight="700" fill="#fff">MasterCard</text>
      </svg>
      <svg className="ml-[17px] h-[26px] w-[26px]" viewBox="0 0 26 26">
        <circle cx="13" cy="13" r="12.8" fill="#f2f3f5" />
        <text x="13" y="15.2" textAnchor="middle" fontSize="6.4" fontWeight="800" fill="#1c5fa6">Pay<tspan fill="#1c96d2">Pal</tspan></text>
      </svg>
      <svg className="ml-[17px] h-[26px] w-[26px]" viewBox="0 0 26 26">
        <circle cx="13" cy="13" r="12.8" fill="#29abe2" />
        <g textAnchor="middle" fontSize="4.2" fontWeight="700" fill="#c9eaf8" fontStyle="normal">
          <text x="13" y="12">AMERICAN</text>
          <text x="13" y="17">EXPRESS</text>
        </g>
      </svg>
      <svg className="ml-[17px] h-[26px] w-[26px]" viewBox="0 0 26 26">
        <clipPath id="disc"><circle cx="13" cy="13" r="12.8" /></clipPath>
        <g clipPath="url(#disc)">
          <rect width="26" height="26" fill="#f1f1f1" />
          <path d="M8 26Q20 24 26 16V26Z" fill="#f37021" />
        </g>
        <g textAnchor="middle" fontWeight="800" fill="#222" fontStyle="normal">
          <text x="13" y="14" fontSize="4.6">DISC<tspan fill="#f37021">O</tspan>VER</text>
          <text x="13" y="17.6" fontSize="2.6">NETWORK</text>
        </g>
      </svg>
    </div>
  );
}

function Footer() {
  return (
    <footer className="relative -mt-[2px] ml-[7px] w-[1344px]">
      <div className="h-[594.5px] bg-[#f8f8f8]">
        <div className="mx-[12px] flex h-[202px] w-[1326px] items-start border-b-[3px] border-[#c0c0c0]">
          <div className="w-[546px] pt-[115px] leading-[24px]">
            <p className="ml-[63px] text-[25px] font-bold tracking-[1px] text-[#222] [-webkit-text-stroke:0.3px]">Know it all first!</p>
            <p className="ml-[62px] mt-[17px] text-[25px] tracking-[1.05px] text-[#a3a3a3] [-webkit-text-stroke:0.6px]">Never miss any newsletters</p>
          </div>
          <div className="relative mt-[89px] h-[112px] w-[3px] bg-[#a3a3a3]" />
          <div className="ml-[134px] mt-[126px] h-[53px] w-[314px] border-[3px] border-[#c6c6c6] bg-white pl-[11.5px] pt-[11px] text-[16.4px] leading-[24px] tracking-[0.25px] text-[#999] [-webkit-text-stroke:0.2px]">
            Enter your email
          </div>
          <button className="ml-[19px] mt-[126px] block h-[51px] w-[142px] bg-[#55cc00] pl-[15.5px] pt-[2px] text-left text-[24px] tracking-[0.65px] text-white [-webkit-text-stroke:1px_#fff]">
            Subscribe
          </button>
        </div>
        <div className="flex items-start">
          <div className="ml-[73px] mt-[52px] w-[541px]">
            <FooterLogo />
            <p className="mt-[9px] whitespace-pre-line font-[Lato] text-[18.6px] leading-[42.4px] tracking-[0.53px] text-[#777]">
              {"Lorem ipsum dolor sit amet, consectetur adipiscing\nelit, sed do eiusmod tempor incididunt ut labore et\ndolore magna aliqua. Ut enim ad minim veniam,"}
            </p>
            <div className="mt-[54px] flex items-start text-black">
              <FaFacebookF className="ml-[1px] mt-[0.5px] h-[24px] w-[15px]" />
              <FaGooglePlusG className="-mt-[6px] ml-[63px] h-[35px] w-[35px]" />
              <FaTwitter className="ml-[63.5px] mt-[0.5px] h-[23px] w-[23px]" />
              <FaInstagram className="-mt-[1px] ml-[62px] h-[27px] w-[27px]" />
              <FaRss className="ml-[61.5px] mt-[0.5px] h-[21.5px] w-[21.5px]" />
            </div>
          </div>
          <FooterLinks
            title="Why Airshef"
            titleClass="tracking-[1.25px]"
            className="mt-[54px] w-[204px]"
            links={[
              ["Safety & Trust", "ml-[1.5px] mt-[21px] tracking-[0.17px]"],
              ["Privacy policy", "ml-[1px] mt-[16px] tracking-[0.25px]"],
              ["FAQ", "ml-[3px] mt-[14px] tracking-[0.5px]"],
            ]}
          />
          <FooterLinks
            title="Explore more"
            titleClass="tracking-[1.42px]"
            className="mt-[53px] w-[205px]"
            links={[
              ["Join as chef", "ml-[2.5px] mt-[14px] tracking-[0.18px]"],
              ["Join as foodie", "ml-[2px] mt-[22px] tracking-[0.28px]"],
              ["Careers", "ml-[3px] mt-[15px] tracking-[0.29px]"],
            ]}
          />
          <div className="ml-[1.5px] mt-[53.5px] font-[Lato] text-[17px] leading-[24.6px] tracking-[0.1px] text-[#777]">
            <h3 className="text-[20px] leading-[24px] tracking-[0.5px] text-[#222] [-webkit-text-stroke:0.5px_#222]">STORE INFORMATION</h3>
            <InfoRow
              className="mt-[45px] h-[65px]"
              icon={<FaMapMarkerAlt className="ml-[1px] mt-[6px] h-[15px] w-[11px]" />}
              lines={"Multikart Demo Store,\nDemo Store India 345-659"}
            />
            <InfoRow className="h-[40.5px]" icon={<FaPhoneAlt className="mt-[6px] h-[13px] w-[13px]" />} lines="Call Us: 123-456-7898" />
            <InfoRow
              className="h-[65.5px]"
              icon={<FaRegEnvelope className="mt-[4px] h-[18px] w-[18px]" />}
              lines={"Email Us:\nSupport@Fiot.Com"}
            />
            <InfoRow icon={<FaFax className="mt-[5px] h-[17px] w-[17px]" />} lines="Fax: 123456" />
          </div>
        </div>
      </div>
      <div className="flex h-[56.5px] items-start bg-white pt-[25px]">
        <p className="ml-[106px] w-[907.5px] font-[Lato] text-[14.5px] leading-[24px] tracking-[0.15px] text-[#777]">© 2017-18 themeforest powered by pixelstrap</p>
        <PaymentBadges />
      </div>
      <div className="h-[6px] bg-[#f8f8f8]" />
    </footer>
  );
}

export default function App() {
  return (
    <div className="h-[2612px] w-[1356px] overflow-hidden bg-white font-['Liberation_Sans',Arial,sans-serif]">
      <Header />
      <main className="relative ml-px flex h-[1672px] items-start bg-[#bdbdbd]">
        <div className="-ml-px flex items-start">
          <CheckoutDetails />
          <div className="h-[1652px] w-[3px] bg-[#959595]" />
          <OrderSummary />
        </div>
        <CardDialog />
      </main>
      <Footer />
    </div>
  );
}
